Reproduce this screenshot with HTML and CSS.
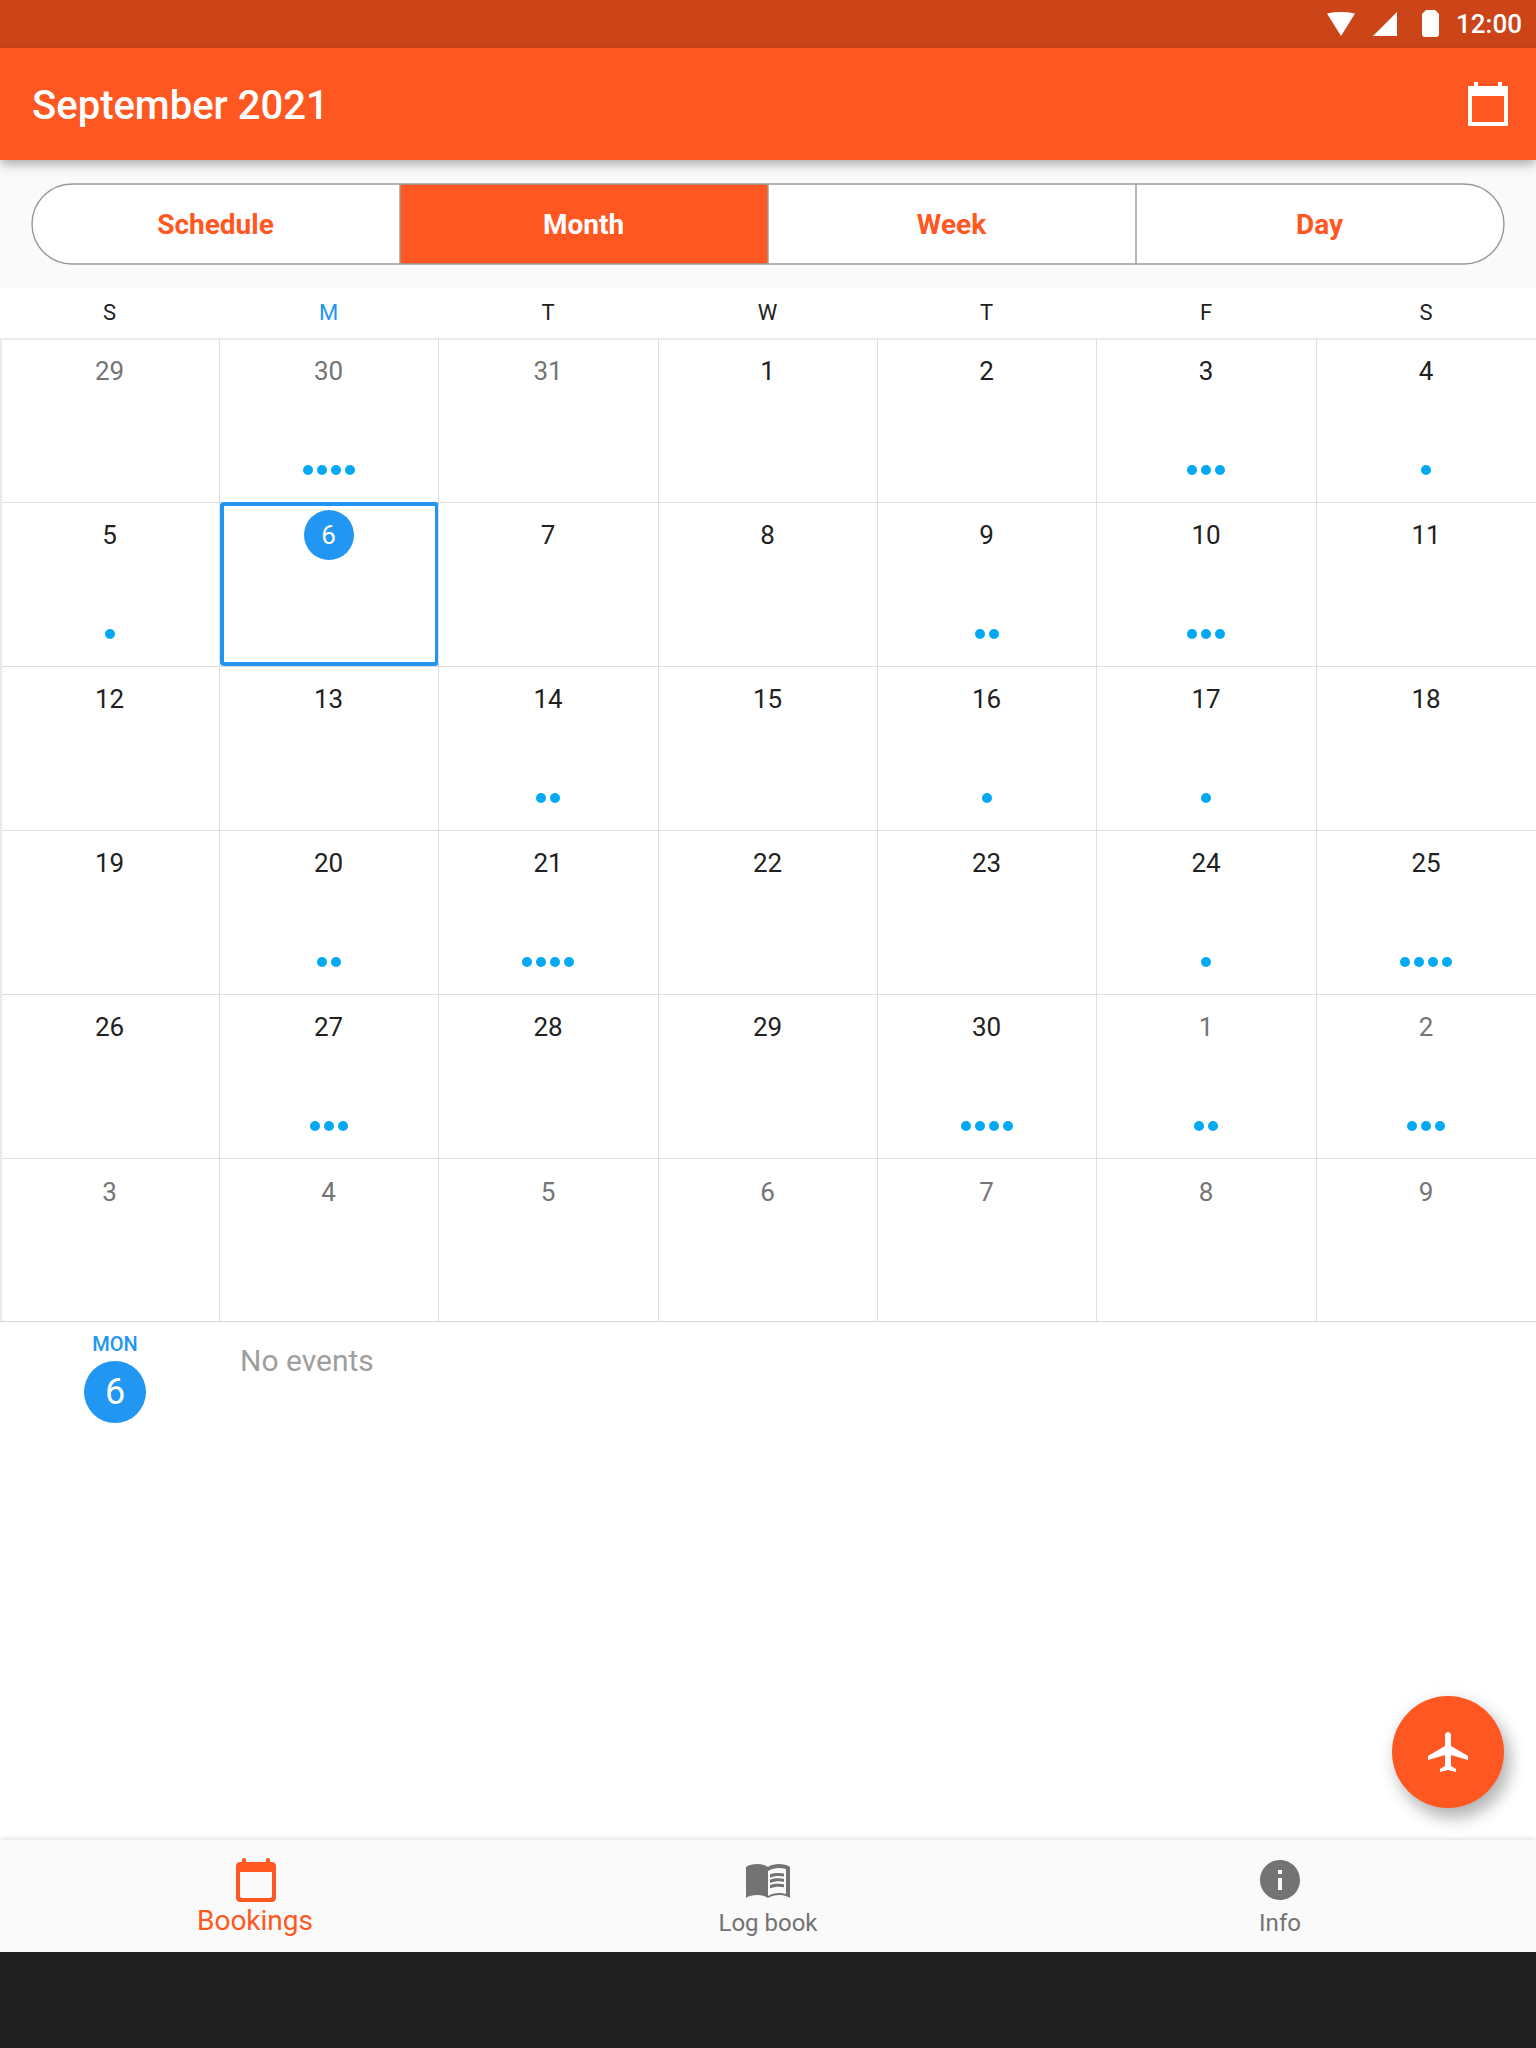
FILE: index.html
```html
<!DOCTYPE html>
<html lang="en">
<head>
<meta charset="utf-8">
<title>September 2021</title>
<link rel="stylesheet" href="styles.css">
</head>
<body>
<div class="app">
  <div class="status">
    <svg class="status-wifi" viewBox="0 0 28 24"><path d="M0 1.5Q14-1.4 28 1.5L14 24Z"/></svg>
    <svg class="status-signal" viewBox="0 0 24 24"><path d="M24 0V24H0Z"/></svg>
    <svg class="status-battery" viewBox="0 0 17 27"><path d="M4 0H13L17 4V24Q17 27 14 27H3Q0 27 0 24V4Z"/></svg>
    <span class="status-time">12:00</span>
  </div>
  <header class="appbar">
    <h1 class="appbar-title">September 2021</h1>
    <svg class="icon appbar-icon" viewBox="0 0 24 24"><path d="M22 3h-3V1h-2v2H7V1H5v2H2v20h20V3zm-2 18H4V8h16v13z"/></svg>
  </header>
  <nav class="views">
    <div class="segments">
      <span class="segment">Schedule</span>
      <span class="segment segment-on">Month</span>
      <span class="segment">Week</span>
      <span class="segment">Day</span>
      <svg class="segments-outline" viewBox="-1 -1 1474 82"><rect width="1472" height="80" rx="40"/><path d="M368 0V80M736 0V80M1104 0V80"/></svg>
    </div>
  </nav>
  <main class="content">
    <div class="weekdays">
      <span>S</span><span class="weekday-today">M</span><span>T</span><span>W</span><span>T</span><span>F</span><span>S</span>
    </div>
    <div class="month">
      <div class="day other"><b>29</b></div>
      <div class="day other"><b>30</b><p class="dots"><i></i><i></i><i></i><i></i></p></div>
      <div class="day other"><b>31</b></div>
      <div class="day"><b>1</b></div>
      <div class="day"><b>2</b></div>
      <div class="day"><b>3</b><p class="dots"><i></i><i></i><i></i></p></div>
      <div class="day"><b>4</b><p class="dots"><i></i></p></div>

      <div class="day"><b>5</b><p class="dots"><i></i></p></div>
      <div class="day selected"><b>6</b></div>
      <div class="day"><b>7</b></div>
      <div class="day"><b>8</b></div>
      <div class="day"><b>9</b><p class="dots"><i></i><i></i></p></div>
      <div class="day"><b>10</b><p class="dots"><i></i><i></i><i></i></p></div>
      <div class="day"><b>11</b></div>

      <div class="day"><b>12</b></div>
      <div class="day"><b>13</b></div>
      <div class="day"><b>14</b><p class="dots"><i></i><i></i></p></div>
      <div class="day"><b>15</b></div>
      <div class="day"><b>16</b><p class="dots"><i></i></p></div>
      <div class="day"><b>17</b><p class="dots"><i></i></p></div>
      <div class="day"><b>18</b></div>

      <div class="day"><b>19</b></div>
      <div class="day"><b>20</b><p class="dots"><i></i><i></i></p></div>
      <div class="day"><b>21</b><p class="dots"><i></i><i></i><i></i><i></i></p></div>
      <div class="day"><b>22</b></div>
      <div class="day"><b>23</b></div>
      <div class="day"><b>24</b><p class="dots"><i></i></p></div>
      <div class="day"><b>25</b><p class="dots"><i></i><i></i><i></i><i></i></p></div>

      <div class="day"><b>26</b></div>
      <div class="day"><b>27</b><p class="dots"><i></i><i></i><i></i></p></div>
      <div class="day"><b>28</b></div>
      <div class="day"><b>29</b></div>
      <div class="day"><b>30</b><p class="dots"><i></i><i></i><i></i><i></i></p></div>
      <div class="day other"><b>1</b><p class="dots"><i></i><i></i></p></div>
      <div class="day other"><b>2</b><p class="dots"><i></i><i></i><i></i></p></div>

      <div class="day other last"><b>3</b></div>
      <div class="day other last"><b>4</b></div>
      <div class="day other last"><b>5</b></div>
      <div class="day other last"><b>6</b></div>
      <div class="day other last"><b>7</b></div>
      <div class="day other last"><b>8</b></div>
      <div class="day other last"><b>9</b></div>
    </div>
    <section class="agenda">
      <div class="agenda-date">
        <span class="agenda-weekday">MON</span>
        <span class="agenda-day">6</span>
      </div>
      <p class="agenda-empty">No events</p>
    </section>
    <div class="fab">
      <svg class="icon" viewBox="0 0 24 24"><path d="M22 16v-2l-8.500-5V3.500c0-.83-.67-1.500-1.500-1.500s-1.500.67-1.500 1.500V9L2 14v2l8.500-2.500V19L8 20.500V22l4-1 4 1v-1.500L13.500 19v-5.500L22 16z"/></svg>
    </div>
  </main>
  <nav class="tabs">
    <div class="tab tab-on">
      <svg class="icon" viewBox="0 0 24 24"><path d="M20 3h-1V2c0-.55-.45-1-1-1s-1 .45-1 1v1H7V2c0-.55-.45-1-1-1s-1 .45-1 1v1H4c-1.100 0-2 .9-2 2v16c0 1.100.9 2 2 2h16c1.100 0 2-.9 2-2V5c0-1.100-.9-2-2-2zm-1 18H5c-.55 0-1-.45-1-1V8h16v12c0 .55-.45 1-1 1z"/></svg>
      <span>Bookings</span>
    </div>
    <div class="tab">
      <svg class="icon icon-book" viewBox="0 0 24 24"><path fill-rule="evenodd" d="M12 5C10.550 3.900 8.450 3.500 6.500 3.500S2.450 3.900 1 5v15.500C2.450 19.400 4.550 19 6.500 19s4.050.4 5.500 1.500c1.350-.85 3.800-1.500 5.500-1.500 1.650 0 3.350.3 4.750 1.050l.75.450V5c-1.450-1.100-3.550-1.500-5.500-1.500S13.450 3.900 12 5zm9 13.500c-1.100-.35-2.300-.5-3.500-.5-1.700 0-4.150.65-5.500 1.500V7c1.350-.85 3.800-1.500 5.500-1.500 1.200 0 2.400.15 3.500.5v12.500z"/><path d="M17.500 8c.88 0 1.730.09 2.500.26V9.780c-.79-.18-1.640-.28-2.500-.28-1.700 0-3.240.29-4.500.83V8.670C14.130 8.240 15.700 8 17.500 8zM13 11.330V12.990C14.260 12.450 15.800 12.160 17.500 12.160c.86 0 1.710.1 2.500.28V10.920c-.77-.17-1.620-.26-2.500-.26-1.800 0-3.370.24-4.500.67zM17.500 13.330c-1.800 0-3.370.24-4.500.67V15.660C14.260 15.120 15.800 14.830 17.500 14.830c.86 0 1.710.1 2.500.28V13.590c-.77-.17-1.620-.26-2.500-.26z"/></svg>
      <span>Log book</span>
    </div>
    <div class="tab">
      <svg class="icon" viewBox="0 0 24 24"><path d="M12 2C6.480 2 2 6.480 2 12s4.480 10 10 10 10-4.480 10-10S17.520 2 12 2zm1 15h-2v-6h2v6zm0-8h-2V7h2v2z"/></svg>
      <span>Info</span>
    </div>
  </nav>
  <div class="system-nav"></div>
</div>
</body>
</html>
```
FILE: styles.css
```css
* { box-sizing: border-box; margin: 0; padding: 0; }

body {
  width: 1536px;
  height: 2048px;
  overflow: hidden;
  background: #fafafa;
  color: #212121;
  font-family: Roboto, "Liberation Sans", sans-serif;
}

.app { display: flex; flex-direction: column; height: 2048px; }

.icon { display: block; width: 48px; height: 48px; fill: currentColor; }

/* Status bar */
.status {
  display: flex;
  flex: none;
  height: 48px;
  padding: 0 14px 0 0;
  justify-content: flex-end;
  align-items: flex-start;
  background: #cc4519;
  color: #fff;
  fill: #fff;
}
.status-wifi { width: 28px; height: 24px; margin-top: 12px; }
.status-signal { width: 24px; height: 24px; margin: 12px 0 0 18px; }
.status-battery { width: 17px; height: 27px; margin: 10px 0 0 25px; }
.status-time { margin-left: 17px; font-size: 26px; font-weight: 500; line-height: 48px; }

/* App bar */
.appbar {
  position: relative;
  z-index: 2;
  display: flex;
  flex: none;
  height: 112px;
  padding: 0 24px 0 32px;
  align-items: center;
  justify-content: space-between;
  background: #ff5722;
  color: #fff;
  box-shadow: 0 4px 8px -2px rgba(0,0,0,.2), 0 8px 10px rgba(0,0,0,.1), 0 2px 16px rgba(0,0,0,.08);
}
.appbar-title { padding-top: 3px; font-size: 40px; font-weight: 500; line-height: 48px; }

/* View switcher */
.views { flex: none; height: 128px; padding: 24px 32px; }
.segments {
  position: relative;
  display: grid;
  grid-template-columns: repeat(4, 1fr);
  height: 80px;
  border-radius: 40px;
  background: #fff;
}
.segment {
  padding-right: 1px;
  color: #ff5722;
  font-size: 28px;
  font-weight: 700;
  line-height: 82px;
  height: 80px;
  text-align: center;
}
.segment-on { background: #ff5722; color: #fff; }
.segments-outline {
  position: absolute;
  top: -1px;
  left: -1px;
  width: 1474px;
  height: 82px;
  fill: none;
  stroke: #999;
  stroke-width: 1.4;
}

/* Calendar */
.content { position: relative; flex: 1; background: #fff; }
.weekdays, .month {
  display: grid;
  grid-template-columns: 219px 219px 220px 219px 219px 220px 220px;
}
.weekdays {
  height: 50px;
  font-size: 22px;
  line-height: 49px;
  text-align: center;
}
.weekday-today { color: #2196f3; }

.month { grid-template-rows: repeat(5, 164px) 163px; height: 984px; border-bottom: 1px solid #d4d4d4; }
.day {
  position: relative;
  display: flex;
  flex-direction: column;
  align-items: center;
  padding-top: 8px;
  box-shadow: inset 1px 1px #dedede;
}
.day:nth-child(-n+7) { box-shadow: inset 1px 0 #dedede, inset 0 2px #ebebeb; }
.day:nth-child(7n+1) { box-shadow: inset 2px 0 #ebebeb, inset 0 1px #dedede; }
.day:first-child { box-shadow: inset 2px 2px #ebebeb; }
.day b {
  width: 50px;
  height: 50px;
  border-radius: 50%;
  font-size: 26px;
  font-weight: 400;
  line-height: 50px;
  text-align: center;
}
.other b { color: #757575; }
.last { padding-top: 9px; }
.selected::after {
  content: "";
  position: absolute;
  inset: 0 -1px 0 1px;
  border: 4px solid #2196f3;
  border-radius: 4px;
}
.selected b { background: #2196f3; color: #fff; }
.dots { display: flex; gap: 4px; margin-top: 68.500px; }
.dots i { width: 10px; height: 10px; border-radius: 50%; background: #03a9f4; }

/* Agenda for the selected day */
.agenda { display: flex; padding-top: 10px; }
.agenda-date {
  display: flex;
  flex-direction: column;
  width: 230px;
  align-items: center;
}
.agenda-weekday { color: #2196f3; font-size: 20px; font-weight: 500; line-height: 24px; }
.agenda-day {
  width: 62px;
  height: 62px;
  margin-top: 5px;
  border-radius: 50%;
  background: #2196f3;
  color: #fff;
  font-size: 36px;
  line-height: 62px;
  text-align: center;
}
.agenda-empty { margin: 11px 0 0 10px; color: #9e9e9e; font-size: 30px; line-height: 36px; }

.fab {
  position: absolute;
  right: 32px;
  bottom: 32px;
  display: flex;
  width: 112px;
  height: 112px;
  align-items: center;
  justify-content: center;
  border-radius: 50%;
  background: #ff5722;
  color: #fff;
  box-shadow: 6px 10px 16px rgba(0,0,0,.26), 2px 4px 22px rgba(0,0,0,.08);
}

/* Bottom navigation */
.tabs {
  position: relative;
  z-index: 1;
  display: grid;
  flex: none;
  grid-template-columns: repeat(3, 1fr);
  height: 112px;
  background: #fafafa;
  box-shadow: 0 -1px 5px rgba(0,0,0,.13);
}
.tab {
  display: flex;
  flex-direction: column;
  align-items: center;
  padding-top: 16px;
  color: #737373;
  font-size: 24px;
  line-height: 38px;
}
.icon-book { transform: translateY(1px); }
.tab-on { color: #ff5722; font-size: 28px; line-height: 34px; }
.tab-on span { margin-right: 2px; }

.system-nav { position: relative; z-index: 2; flex: none; height: 96px; background: #202020; }
```
